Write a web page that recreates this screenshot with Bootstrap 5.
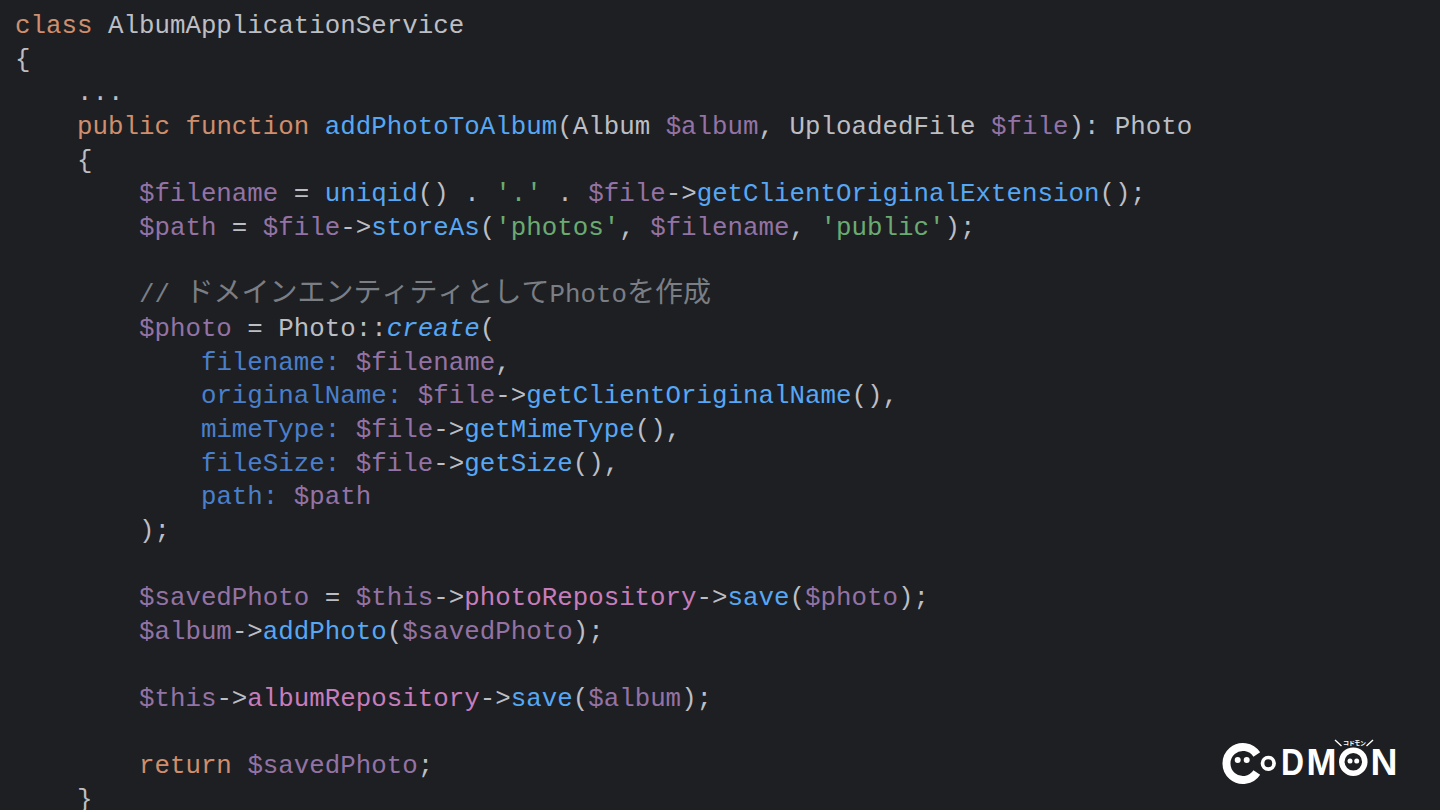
<!DOCTYPE html>
<html lang="en">
<head>
<meta charset="utf-8">
<title>AlbumApplicationService</title>
<link href="https://cdn.jsdelivr.net/npm/bootstrap@5.3.0/dist/css/bootstrap.min.css" rel="stylesheet">
<style>
html,body{height:100%;}
body{background:#1e1f22;overflow:hidden;}
.code-sheet{height:810px;overflow:hidden;padding:10px 0 0 15px;font-family:"Liberation Mono",monospace;font-size:25.82px;color:#bcbec4;}
.ln{height:33.67px;line-height:33.67px;white-space:pre;}
.k{color:#cf8e6d}.f{color:#56a8f5}.v{color:#9373a5}.p{color:#c77dbb}.s{color:#6aab73}.c{color:#7a7e85}.n{color:#4a7fcb}
.i{font-style:italic}
.jp{font-family:"Noto Sans CJK JP",sans-serif;font-size:28px;line-height:0;font-kerning:none;font-feature-settings:"palt" 0,"kern" 0;}
.logo-mark{position:absolute;left:1200px;top:720px;}
.logo-mark text{fill:#fff;font-family:"Liberation Sans",sans-serif;font-weight:700;}
</style>
</head>
<body class="position-relative">
<main class="code-sheet">
<div class="ln"><span class="k">class</span> AlbumApplicationService</div>
<div class="ln">{</div>
<div class="ln">    ...</div>
<div class="ln">    <span class="k">public function</span> <span class="f">addPhotoToAlbum</span>(Album <span class="v">$album</span>, UploadedFile <span class="v">$file</span>): Photo</div>
<div class="ln">    {</div>
<div class="ln">        <span class="v">$filename</span> = <span class="f">uniqid</span>() . <span class="s">'.'</span> . <span class="v">$file</span>-&gt;<span class="f">getClientOriginalExtension</span>();</div>
<div class="ln">        <span class="v">$path</span> = <span class="v">$file</span>-&gt;<span class="f">storeAs</span>(<span class="s">'photos'</span>, <span class="v">$filename</span>, <span class="s">'public'</span>);</div>
<div class="ln"> </div>
<div class="ln">        <span class="c">// <span class="jp">ドメインエンティティとして</span>Photo<span class="jp">を作成</span></span></div>
<div class="ln">        <span class="v">$photo</span> = Photo::<span class="f i">create</span>(</div>
<div class="ln">            <span class="n">filename:</span> <span class="v">$filename</span>,</div>
<div class="ln">            <span class="n">originalName:</span> <span class="v">$file</span>-&gt;<span class="f">getClientOriginalName</span>(),</div>
<div class="ln">            <span class="n">mimeType:</span> <span class="v">$file</span>-&gt;<span class="f">getMimeType</span>(),</div>
<div class="ln">            <span class="n">fileSize:</span> <span class="v">$file</span>-&gt;<span class="f">getSize</span>(),</div>
<div class="ln">            <span class="n">path:</span> <span class="v">$path</span></div>
<div class="ln">        );</div>
<div class="ln"> </div>
<div class="ln">        <span class="v">$savedPhoto</span> = <span class="v">$this</span>-&gt;<span class="p">photoRepository</span>-&gt;<span class="f">save</span>(<span class="v">$photo</span>);</div>
<div class="ln">        <span class="v">$album</span>-&gt;<span class="f">addPhoto</span>(<span class="v">$savedPhoto</span>);</div>
<div class="ln"> </div>
<div class="ln">        <span class="v">$this</span>-&gt;<span class="p">albumRepository</span>-&gt;<span class="f">save</span>(<span class="v">$album</span>);</div>
<div class="ln"> </div>
<div class="ln">        <span class="k">return</span> <span class="v">$savedPhoto</span>;</div>
<div class="ln">    }</div>
</main>
<svg class="logo-mark" width="220" height="80" viewBox="0 0 220 80" role="img" aria-label="CoDMON">
  <g fill="none" stroke="#fff">
    <path d="M56.8 34.5A16.5 16.5 0 1 0 56.8 52.5" stroke-width="8"/>
    <circle cx="68.3" cy="43.3" r="5.8" stroke-width="3.7"/>
    <circle cx="153.3" cy="41.7" r="11.5" stroke-width="5.5"/>
    <path d="M135 20l6.5 6M173 20l-6.5 6" stroke-width="1.4"/>
  </g>
  <g fill="#fff">
    <circle cx="37.7" cy="40" r="3"/><circle cx="46.7" cy="40" r="3"/>
    <circle cx="150" cy="41" r="2.5"/><circle cx="156.7" cy="41" r="2.5"/>
    <text x="81" y="55" font-size="37" textLength="23" lengthAdjust="spacingAndGlyphs">D</text>
    <text x="106.5" y="55" font-size="37" textLength="30" lengthAdjust="spacingAndGlyphs">M</text>
    <text x="170.5" y="55" font-size="37" textLength="27" lengthAdjust="spacingAndGlyphs">N</text>
    <text x="143" y="25" font-size="6" style="font-family:'Noto Sans CJK JP',sans-serif" textLength="23">コドモン</text>
  </g>
</svg>
</body>
</html>
